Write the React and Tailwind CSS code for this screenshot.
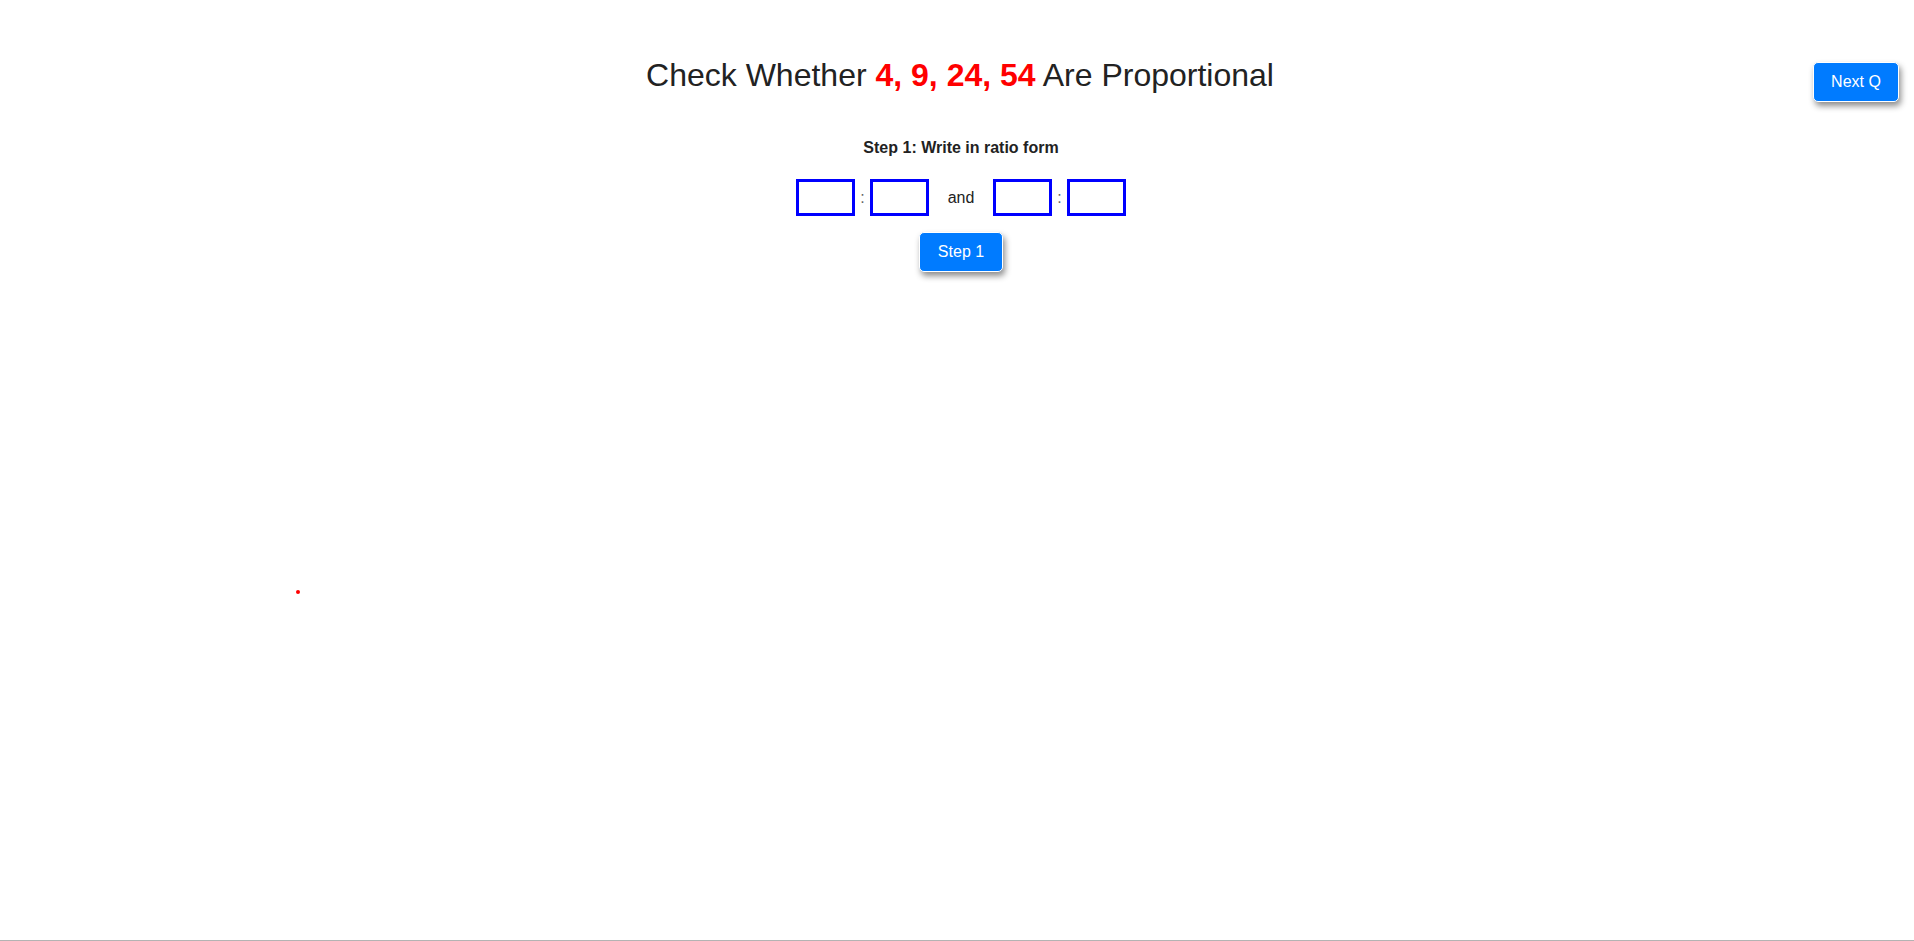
import React from 'react';

const font = { fontFamily: '"Liberation Sans", Arial, sans-serif' };

const RatioBox = () => (
    <input
        type="text"
        className="w-[59px] h-[37px] border-[3px] border-[#0000ff] bg-white outline-none text-center text-[16px]"
    />
);

const App = () => {
    return (
        <div
            className="relative h-[941px] w-full overflow-hidden bg-white border-b border-[#b3b3b3] text-[#222]"
            style={font}
        >
            {/* Header row: title centered, Next Q at right */}
            <div className="grid grid-cols-[1fr_auto_1fr] items-start h-[37px] mt-[57px] pr-[15px] pl-[21px]">
                <div />
                <h1 className="text-[32px] leading-[37px] font-normal whitespace-nowrap">
                    Check Whether <span className="text-[#ff0000] font-bold">4, 9, 24, 54</span> Are Proportional
                </h1>
                <div className="flex justify-end">
                    <button className="mt-[5px] w-[86px] h-[40px] rounded-[5px] bg-[#007bff] text-white text-[16px] leading-[18px] border border-white shadow-[2px_4px_6px_rgba(0,0,0,0.45)]">
                        Next Q
                    </button>
                </div>
            </div>

            {/* Step 1 */}
            <div className="flex flex-col items-center pl-[8px]">
                <p className="mt-[45px] text-[16px] leading-[18px] font-bold">Step 1: Write in ratio form</p>

                <div className="mt-[22px] flex items-center text-[16px]">
                    <RatioBox />
                    <span className="px-[5px] text-[#666]">:</span>
                    <RatioBox />
                    <span className="mx-[19px]">and</span>
                    <RatioBox />
                    <span className="px-[5px] text-[#666]">:</span>
                    <RatioBox />
                </div>

                <button className="mt-[16px] w-[84px] h-[40px] rounded-[5px] bg-[#007bff] text-white text-[16px] leading-[18px] border border-white shadow-[2px_4px_6px_rgba(0,0,0,0.45)]">
                    Step 1
                </button>
            </div>

            {/* stray marker dot */}
            <div className="absolute left-[296px] top-[590px] w-[4px] h-[4px] rounded-full bg-[#ff0000]" />
        </div>
    );
};

export default App;
